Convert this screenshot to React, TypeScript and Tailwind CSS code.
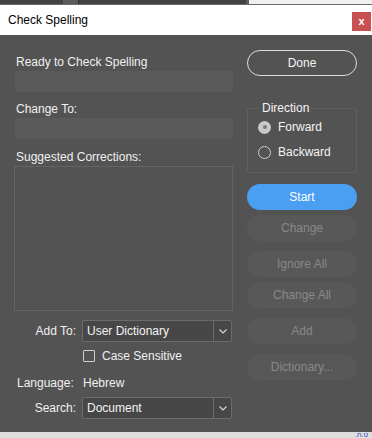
import React from 'react';

const font = { fontFamily: '"Liberation Sans", Arial, sans-serif' };

/** Rounded pill button used down the right column. */
const PillButton: React.FC<{ label: string; variant?: 'outline' | 'primary' | 'disabled'; className?: string }> = ({
  label,
  variant = 'disabled',
  className = '',
}) => {
  const look =
    variant === 'outline'
      ? 'border border-[#dcdcdc] text-[#f4f4f4]'
      : variant === 'primary'
        ? 'bg-[#4b9ff2] text-white'
        : 'bg-[#585858] text-[#888888]';
  return (
    <div className={`h-[26px] w-[110px] rounded-full flex items-center justify-center text-[12px] ${look} ${className}`}>
      {label}
    </div>
  );
};

const Select: React.FC<{ value: string }> = ({ value }) => (
  <div className="h-[22px] w-[150px] flex border border-[#6b6b6b] bg-[#474747] rounded-[2px]">
    <div className="flex-1 flex items-center pl-[4px] text-[12px] text-[#f4f4f4]">{value}</div>
    <div className="w-[18px] border-l border-[#6b6b6b] flex items-center justify-center">
      <svg width="8" height="5" viewBox="0 0 8 5" fill="none">
        <path d="M0.5 0.5 L4 4 L7.5 0.5" stroke="#dcdcdc" strokeWidth="1.1" />
      </svg>
    </div>
  </div>
);

const Radio: React.FC<{ label: string; checked?: boolean; className?: string }> = ({ label, checked, className = '' }) => (
  <div className={`flex items-center h-[16px] ${className}`}>
    {checked ? (
      <span className="w-[13px] h-[13px] rounded-full bg-[#c9c9c9] flex items-center justify-center">
        <span className="w-[4px] h-[4px] rounded-full bg-[#7a7a7a]" />
      </span>
    ) : (
      <span className="w-[13px] h-[13px] rounded-full border border-[#cfcfcf]" />
    )}
    <span className="ml-[7px] text-[12px] text-[#f4f4f4]">{label}</span>
  </div>
);

export default function App() {
  return (
    <div className="w-[372px] h-[438px] flex flex-col bg-[#535353] overflow-hidden" style={font}>
      {/* window behind the dialog */}
      <div className="h-[5px] flex bg-[#424242] border-b border-[#6a6a6a]">
        <div className="w-[63px]" />
        <div className="w-[15px] bg-[#5b5b5b]" />
        <div className="w-[168px] border-l border-[#2f2f2f]" />
        <div className="flex-1 bg-[#f0f0f0] border-l-[3px] border-[#5b5b5b]" />
      </div>

      {/* title bar */}
      <div className="h-[30px] bg-white flex justify-between">
        <div className="pl-[8px] pt-[7px] text-[12px] leading-[16px] text-black">Check Spelling</div>
        <div className="mt-[7px] mr-[1px] w-[19px] h-[19px] bg-[#c75050] flex items-center justify-center text-white text-[11px] font-bold leading-none">
          x
        </div>
      </div>

      {/* body */}
      <div className="flex-1 flex">
        {/* left column */}
        <div className="ml-[14px] w-[219px] flex flex-col text-[12px] leading-[16px] text-[#f0f0f0]">
          <div className="mt-[19px] pl-[2px]">Ready to Check Spelling</div>
          <div className="mt-[1px] ml-[1px] h-[21px] rounded-[3px] bg-[#5a5a5a]" />
          <div className="mt-[9px] pl-[2px]">Change To:</div>
          <div className="mt-[1px] ml-[1px] h-[21px] rounded-[3px] bg-[#5a5a5a]" />
          <div className="mt-[10px] pl-[2px]">Suggested Corrections:</div>
          <div className="mt-[1px] h-[145px] border border-[#646464]" />

          <div className="mt-[9px] flex items-center">
            <div className="w-[62px] text-right">Add To:</div>
            <div className="ml-[6px]">
              <Select value="User Dictionary" />
            </div>
          </div>

          <div className="mt-[6px] ml-[69px] flex items-center h-[16px]">
            <span className="w-[12px] h-[12px] border border-[#cfcfcf] rounded-[1px]" />
            <span className="ml-[7px]">Case Sensitive</span>
          </div>

          <div className="mt-[11px] flex">
            <div className="w-[62px] pl-[3px]">Language:</div>
            <div className="ml-[7px]">Hebrew</div>
          </div>

          <div className="mt-[6px] flex items-center">
            <div className="w-[62px] text-right">Search:</div>
            <div className="ml-[6px]">
              <Select value="Document" />
            </div>
          </div>
        </div>

        {/* right column */}
        <div className="ml-[14px] w-[110px] flex flex-col">
          <PillButton label="Done" variant="outline" className="mt-[15px]" />

          <fieldset className="mt-[24px] border border-[#5f5f5f] rounded-[2px] pb-[12px]">
            <legend className="ml-[12px] px-[2px] text-[12px] leading-[16px] text-[#f4f4f4]">Direction</legend>
            <div className="pl-[10px]">
              <Radio label="Forward" checked className="mt-[3px]" />
              <Radio label="Backward" className="mt-[9px]" />
            </div>
          </fieldset>

          <PillButton label="Start" variant="primary" className="mt-[11px]" />
          <PillButton label="Change" className="mt-[5px]" />
          <PillButton label="Ignore All" className="mt-[10px]" />
          <PillButton label="Change All" className="mt-[5px]" />
          <PillButton label="Add" className="mt-[10px]" />
          <PillButton label="Dictionary..." className="mt-[10px]" />
        </div>
      </div>

      {/* edge of the page below */}
      <div className="h-[6px] bg-[#dedede] flex justify-end items-center">
        <span className="mr-[4px] text-[7px] leading-[6px] text-[#2a3fd0]">.ט.ח</span>
      </div>
    </div>
  );
}
